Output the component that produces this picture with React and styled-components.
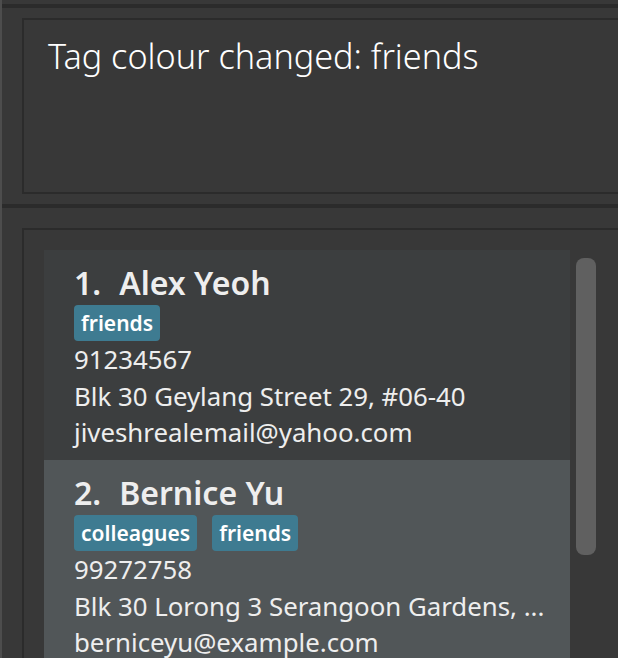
import React from 'react';
import styled, { createGlobalStyle } from 'styled-components';

const persons = [
  {
    id: 1,
    name: 'Alex Yeoh',
    tags: ['friends'],
    phone: '91234567',
    address: 'Blk 30 Geylang Street 29, #06-40',
    email: 'jiveshrealemail@yahoo.com',
  },
  {
    id: 2,
    name: 'Bernice Yu',
    tags: ['colleagues', 'friends'],
    phone: '99272758',
    address: 'Blk 30 Lorong 3 Serangoon Gardens, ...',
    email: 'berniceyu@example.com',
  },
];

const GlobalStyle = createGlobalStyle`
  html, body {
    margin: 0;
    padding: 0;
    background: #383838;
    overflow: hidden;
  }
  body {
    font-family: "Noto Sans", "Open Sans", sans-serif;
  }
`;

const Window = styled.div`
  display: flex;
  flex-direction: column;
  height: 100vh;
  background: #383838;
  border-left: 2px solid #4d4d4d;
  overflow: hidden;
`;

const Divider = styled.div`
  flex: none;
  height: 4px;
  margin-top: ${p => p.top || 0}px;
  background: #2b2b2b;
`;

const Pane = styled.div`
  flex: none;
  padding: ${p => p.pad};
`;

const ResultBox = styled.div`
  box-sizing: border-box;
  height: 176px;
  width: calc(100% + 40px);
  border: 2px solid #2b2b2b;
  padding: 13px 0 0 24px;
  color: #ffffff;
  font-size: 34.2px;
  font-weight: 300;
  line-height: 46px;
  white-space: nowrap;
`;

const ListBox = styled.div`
  display: flex;
  align-items: flex-start;
  gap: 6px;
  width: calc(100% + 40px);
  height: 600px;
  border: 2px solid #2b2b2b;
  padding: 20px 0 0 20px;
`;

const List = styled.ul`
  flex: none;
  width: 526px;
  margin: 0;
  padding: 0;
  list-style: none;
`;

const Card = styled.li`
  box-sizing: border-box;
  height: 210px;
  padding: 13px 0 0 30px;
  background: ${p => (p.odd ? '#515658' : '#3c3e3f')};
  color: #eeeeee;
`;

const Name = styled.div`
  display: flex;
  gap: 18px;
  font-size: 32px;
  font-weight: 600;
  line-height: 40px;
  white-space: nowrap;
`;

const Tags = styled.div`
  display: flex;
  gap: 15px;
  margin-top: 2px;
`;

const Tag = styled.span`
  height: 36px;
  padding: 0 7px;
  border-radius: 4px;
  background: #3e7b91;
  color: #ffffff;
  font-size: 21px;
  font-weight: 600;
  line-height: 36px;
`;

const Detail = styled.div`
  font-size: 25.8px;
  line-height: 36.5px;
  white-space: nowrap;
`;

const Thumb = styled.div`
  flex: none;
  width: 20px;
  height: 297px;
  margin-top: 8px;
  border-radius: 8px;
  background: #606060;
`;

export default function App() {
  return (
    <Window>
      <GlobalStyle />
      <Divider top={4} />
      <Pane pad="10px 0 10px 20px">
        <ResultBox>Tag colour changed: friends</ResultBox>
      </Pane>
      <Divider />
      <Pane pad="20px 0 0 20px">
        <ListBox>
          <List>
            {persons.map((p, i) => (
              <Card key={p.id} odd={i % 2 === 1}>
                <Name>
                  <span>{i + 1}.</span>
                  <span>{p.name}</span>
                </Name>
                <Tags>
                  {p.tags.map(t => (
                    <Tag key={t}>{t}</Tag>
                  ))}
                </Tags>
                <Detail>{p.phone}</Detail>
                <Detail>{p.address}</Detail>
                <Detail>{p.email}</Detail>
              </Card>
            ))}
          </List>
          <Thumb />
        </ListBox>
      </Pane>
    </Window>
  );
}
